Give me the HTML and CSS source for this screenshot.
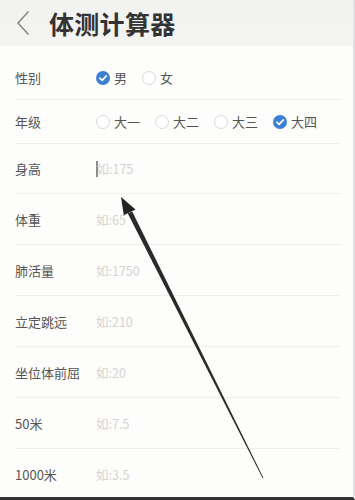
FILE: index.html
```html
<!DOCTYPE html>
<html lang="zh">
<head>
<meta charset="utf-8">
<link rel="stylesheet" href="styles.css">
</head>
<body>
<div class="page">
  <header class="bar">
    <svg class="back" width="14" height="26" viewBox="0 0 14 26"><path d="M12.5 1.5 L2 13 L12.5 24.5" fill="none" stroke="#8a8a8a" stroke-width="1.6"/></svg>
    <h1 class="title">体测计算器</h1>
  </header>
  <main class="form">
    <div class="row short">
      <span class="label">性别</span>
      <div class="opts">
        <span class="opt"><span class="radio on"><svg viewBox="0 0 14 14" width="14" height="14"><path d="M3.8 7.2 L6.2 9.4 L10.3 4.9" fill="none" stroke="#fff" stroke-width="1.7" stroke-linecap="round" stroke-linejoin="round"/></svg></span>男</span>
        <span class="opt"><span class="radio"></span>女</span>
      </div>
    </div>
    <div class="row short">
      <span class="label">年级</span>
      <div class="opts">
        <span class="opt"><span class="radio"></span>大一</span>
        <span class="opt"><span class="radio"></span>大二</span>
        <span class="opt"><span class="radio"></span>大三</span>
        <span class="opt"><span class="radio on"><svg viewBox="0 0 14 14" width="14" height="14"><path d="M3.8 7.2 L6.2 9.4 L10.3 4.9" fill="none" stroke="#fff" stroke-width="1.7" stroke-linecap="round" stroke-linejoin="round"/></svg></span>大四</span>
      </div>
    </div>
    <div class="row first">
      <span class="label">身高</span>
      <div class="field"><span class="caret"></span><span class="ph">如:175</span></div>
    </div>
    <div class="row">
      <span class="label">体重</span>
      <div class="field"><span class="ph">如:65</span></div>
    </div>
    <div class="row">
      <span class="label">肺活量</span>
      <div class="field"><span class="ph">如:1750</span></div>
    </div>
    <div class="row">
      <span class="label">立定跳远</span>
      <div class="field"><span class="ph">如:210</span></div>
    </div>
    <div class="row">
      <span class="label">坐位体前屈</span>
      <div class="field"><span class="ph">如:20</span></div>
    </div>
    <div class="row">
      <span class="label">50米</span>
      <div class="field"><span class="ph">如:7.5</span></div>
    </div>
    <div class="row last">
      <span class="label">1000米</span>
      <div class="field"><span class="ph">如:3.5</span></div>
    </div>
  </main>
  <svg class="arrow" width="355" height="500" viewBox="0 0 355 500">
    <polygon points="132.2,211.5 263.6,478.2 262.4,477.8 127.8,213.5" fill="#2a2a2a"/>
    <polygon points="121,197 135.5,209.5 123.8,215.3" fill="#222"/>
  </svg>
</div>
</body>
</html>
```

FILE: styles.css
```css
html, body {
  margin: 0;
  padding: 0;
}
body {
  background: #fdfdfb;
  font-family: "Noto Sans CJK SC", "Noto Sans", sans-serif;
}
.page {
  position: relative;
  width: 355px;
  height: 500px;
  overflow: hidden;
  box-sizing: border-box;
  border-right: 2px solid #e2e2e2;
  border-bottom: 3px solid #333;
  background: #fdfdfb;
}
.bar {
  height: 46px;
  background: linear-gradient(#f2f2f1, #f4f4f3);
  display: flex;
  align-items: center;
  padding-left: 16px;
  box-sizing: border-box;
}
.back {
  display: block;
}
.title {
  margin: 0 0 0 19px;
  font-size: 25px;
  font-weight: 700;
  color: #333;
  letter-spacing: 0.3px;
  line-height: 1;
}
.form {
  padding-top: 10px;
}
.row {
  margin: 0 12px 0 15px;
  height: 50px;
  border-bottom: 1px solid #efefed;
  display: flex;
  align-items: center;
}
.row.short {
  height: 43px;
}
.row.first {
  height: 49px;
}
.row.last {
  border-bottom: none;
}
.label {
  width: 81px;
  flex: none;
  font-size: 13px;
  color: #555;
}
.opts {
  display: flex;
  align-items: center;
  gap: 15px;
}
.opt {
  display: flex;
  align-items: center;
  font-size: 13px;
  color: #555;
}
.radio {
  width: 14px;
  height: 14px;
  box-sizing: border-box;
  border: 1px solid #d8d8d8;
  border-radius: 50%;
  margin-right: 4px;
  background: #fff;
  display: flex;
}
.radio.on {
  border: none;
  background: #3b80d4;
}
.field {
  display: flex;
  align-items: center;
}
.ph {
  font-size: 12.5px;
  color: #d4d4d4;
}
.caret {
  width: 1.5px;
  height: 16px;
  background: #8a8a8a;
  margin-right: -1px;
}
.arrow {
  position: absolute;
  left: 0;
  top: 0;
  pointer-events: none;
}
```
